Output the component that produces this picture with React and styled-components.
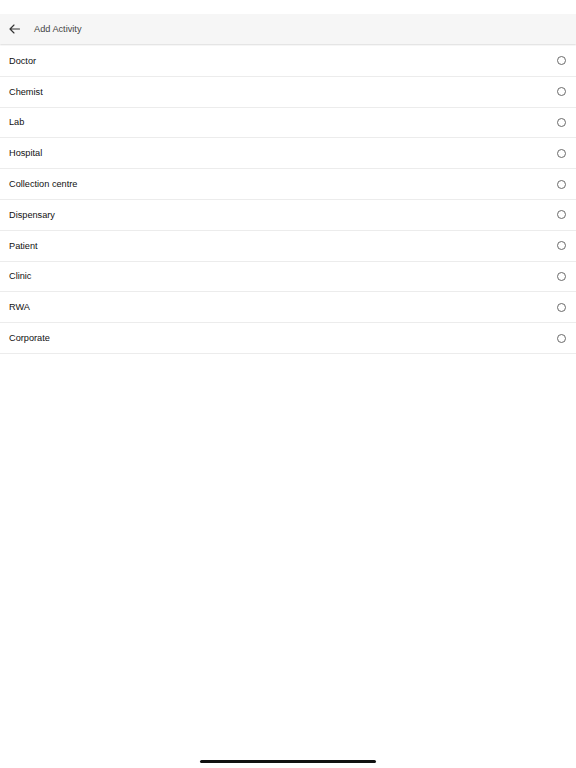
import React, { useState } from "react";
import styled, { createGlobalStyle } from "styled-components";

const GlobalStyle = createGlobalStyle`
  html, body {
    margin: 0;
    padding: 0;
    background: #fff;
  }
  body {
    font-family: "Liberation Sans", Arial, sans-serif;
    -webkit-font-smoothing: antialiased;
  }
`;

const Screen = styled.div`
  width: 576px;
  height: 768px;
  display: flex;
  flex-direction: column;
  background: #fff;
  position: relative;
  overflow: hidden;
`;

const StatusBar = styled.div`
  height: 14px;
  background: #fff;
`;

const Toolbar = styled.div`
  height: 30px;
  display: flex;
  align-items: center;
  background: #f6f6f6;
  box-shadow: 0 1px 1.5px rgba(0, 0, 0, 0.14);
  position: relative;
  z-index: 1;
  margin-bottom: 2px;
`;

const BackButton = styled.button`
  width: 34px;
  height: 30px;
  padding: 0 0 0 9px;
  margin: 0;
  border: none;
  background: transparent;
  display: flex;
  align-items: center;
  cursor: pointer;
`;

const Title = styled.span`
  font-size: 9.2px;
  color: #444;
`;

const List = styled.ul`
  list-style: none;
  margin: 0;
  padding: 0;
`;

const Row = styled.li`
  height: 30.8px;
  box-sizing: border-box;
  display: flex;
  align-items: center;
  justify-content: space-between;
  padding: 0 10px 0 9px;
  border-bottom: 1.5px solid #ececec;
  font-size: 9.2px;
  color: #111;
  cursor: pointer;
`;

const Radio = styled.span`
  width: 7px;
  height: 7px;
  border-radius: 50%;
  border: 1.2px solid ${(p) => (p.checked ? "#2a7de1" : "#6a6a6a")};
  background: ${(p) => (p.checked ? "#2a7de1" : "transparent")};
`;

const HomeIndicator = styled.div`
  position: absolute;
  left: 200px;
  bottom: 5px;
  width: 176px;
  height: 3.5px;
  border-radius: 2px;
  background: #111;
`;

const activities = [
  "Doctor",
  "Chemist",
  "Lab",
  "Hospital",
  "Collection centre",
  "Dispensary",
  "Patient",
  "Clinic",
  "RWA",
  "Corporate",
];

const App = () => {
  const [selected, setSelected] = useState(null);

  return (
    <Screen>
      <GlobalStyle />
      <StatusBar />
      <Toolbar>
        <BackButton aria-label="Back">
          <svg width="11" height="10" viewBox="0 0 11 10" fill="none">
            <path
              d="M10.5 5H1M5 1L1 5l4 4"
              stroke="#333"
              strokeWidth="1.1"
              strokeLinecap="round"
              strokeLinejoin="round"
            />
          </svg>
        </BackButton>
        <Title>Add Activity</Title>
      </Toolbar>
      <List>
        {activities.map((name) => (
          <Row key={name} onClick={() => setSelected(name)}>
            <span>{name}</span>
            <Radio checked={selected === name} />
          </Row>
        ))}
      </List>
      <HomeIndicator />
    </Screen>
  );
};

export default App;
